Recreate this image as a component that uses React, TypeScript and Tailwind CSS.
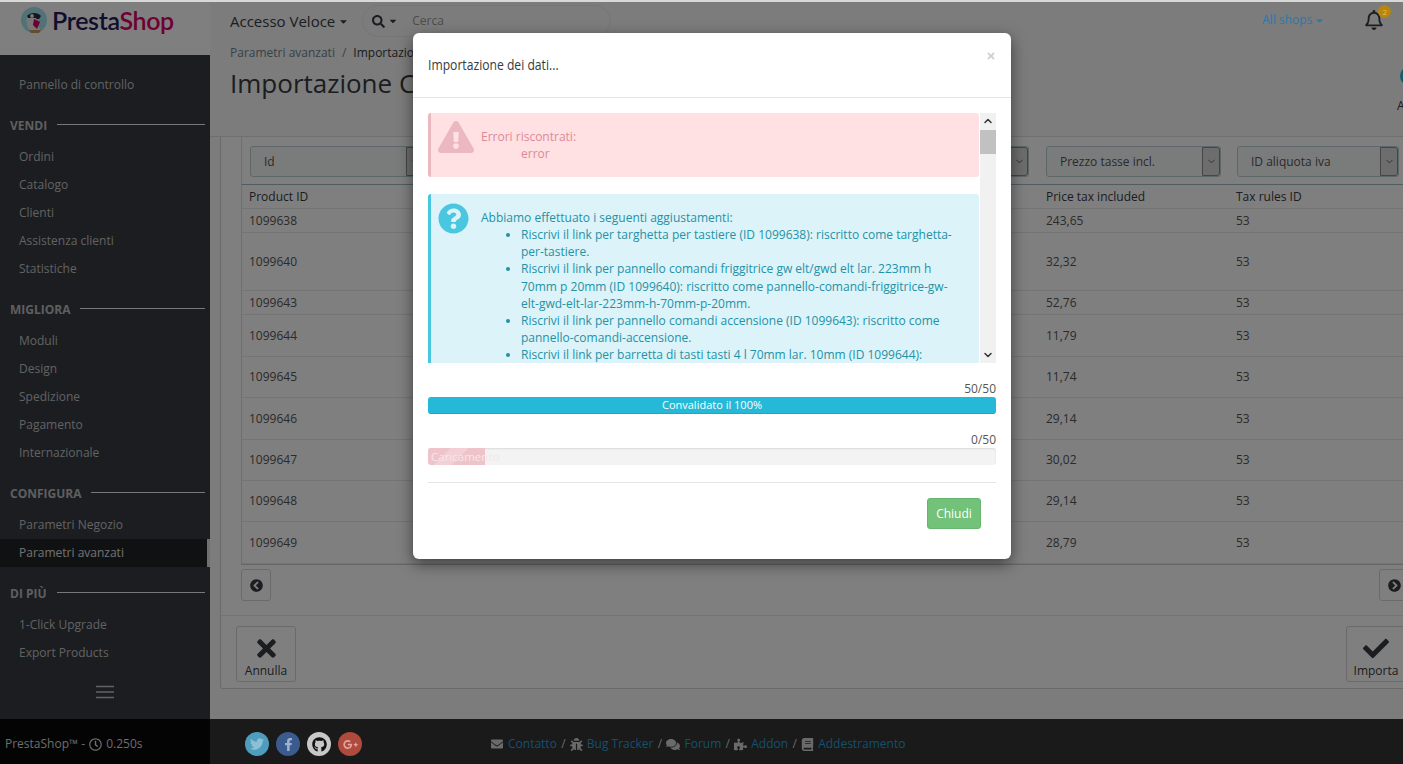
import React from 'react';
import { ChevronDown, ChevronUp } from 'lucide-react';
import {
  FaBook, FaBug, FaCaretDown, FaCheck, FaChevronCircleLeft, FaChevronCircleRight, FaComments,
  FaEnvelope, FaExclamationTriangle, FaFacebookF, FaGithub, FaGooglePlusG, FaPuzzlePiece, FaQuestionCircle,
  FaRegBell, FaRegClock, FaSearch, FaTimes, FaTwitter,
} from 'react-icons/fa';

const navGroups = [
  { title: '', items: ['Pannello di controllo'] },
  { title: 'VENDI', items: ['Ordini', 'Catalogo', 'Clienti', 'Assistenza clienti', 'Statistiche'] },
  { title: 'MIGLIORA', items: ['Moduli', 'Design', 'Spedizione', 'Pagamento', 'Internazionale'] },
  { title: 'CONFIGURA', items: ['Parametri Negozio', 'Parametri avanzati'] },
  { title: 'DI PIÙ', items: ['1-Click Upgrade', 'Export Products'] },
];

const rows = [
  { id: '1099638', price: '243,65', h: 'h-[24px]' },
  { id: '1099640', price: '32,32', h: 'h-[58px]' },
  { id: '1099643', price: '52,76', h: 'h-[24px]' },
  { id: '1099644', price: '11,79', h: 'h-[42px]' },
  { id: '1099645', price: '11,74', h: 'h-[41px]' },
  { id: '1099646', price: '29,14', h: 'h-[42px]' },
  { id: '1099647', price: '30,02', h: 'h-[41px]' },
  { id: '1099648', price: '29,14', h: 'h-[41px]' },
  { id: '1099649', price: '28,79', h: 'h-[42px]' },
];

const fixes = [
  'Riscrivi il link per targhetta per tastiere (ID 1099638): riscritto come targhetta-per-tastiere.',
  'Riscrivi il link per pannello comandi friggitrice gw elt/gwd elt lar. 223mm h 70mm p 20mm (ID 1099640): riscritto come pannello-comandi-friggitrice-gw-elt-gwd-elt-lar-223mm-h-70mm-p-20mm.',
  'Riscrivi il link per pannello comandi accensione (ID 1099643): riscritto come pannello-comandi-accensione.',
  'Riscrivi il link per barretta di tasti tasti 4 l 70mm lar. 10mm (ID 1099644):',
];

const footerLinks = [
  { icon: <FaEnvelope className="w-[14px] h-[12px]" />, label: 'Contatto' },
  { icon: <FaBug className="w-[13px] h-[13px]" />, label: 'Bug Tracker' },
  { icon: <FaComments className="w-[14px] h-[13px]" />, label: 'Forum' },
  { icon: <FaPuzzlePiece className="w-[13px] h-[13px]" />, label: 'Addon' },
  { icon: <FaBook className="w-[13px] h-[13px]" />, label: 'Addestramento' },
];

const Select: React.FC<{ label: string; className: string }> = ({ label, className }) => (
  <div className={`h-[31px] shrink-0 flex items-center justify-between rounded-[3px] border border-[#bbcdd2] bg-[#f5f8f9] ${className}`}>
    <span className="pl-[13px] text-[12px] text-[#555]">{label}</span>
    <span className="w-[18px] h-full flex items-center justify-center bg-[#dadada] border border-[#8a8a8a] rounded-r-[3px] text-[#333]">
      <ChevronDown className="w-[11px] h-[11px]" strokeWidth={1.5} />
    </span>
  </div>
);

const Logo = () => (
  <div className="h-[53px] mt-[2px] flex items-start pl-[21px] pt-[5px]">
    <svg width="26" height="26" viewBox="0 0 26 26" className="shrink-0">
      <circle cx="13" cy="13" r="13" fill="#a3e4ee" />
      <path d="M6 9c3-4 11-4 14 0l-2 3H8z" fill="#2a2a3c" />
      <circle cx="11" cy="9" r="2" fill="#e8e8e8" />
      <path d="M6 11c-1 5 0 9 3 12 3 2 8 2 10 0l-4-12z" fill="#f1f1f1" />
      <path d="M13 12l6 3-3 7-4-4z" fill="#df0067" />
      <path d="M8 23h12l-2 3h-8z" fill="#c89a5a" />
    </svg>
    <span className="ml-[5px] mt-[-3px] text-[25px] leading-[32px] font-semibold tracking-[-0.35px] font-['Lato',sans-serif]">
      <span className="text-[#251b5b]">Presta</span>
      <span className="text-[#df0067]">Shop</span>
    </span>
  </div>
);

const Sidebar = () => (
  <div className="flex-1 flex flex-col pt-[16px] bg-[#363a41] text-[12px] text-[#c4c4c4]">
    {navGroups.map(group => (
      <div key={group.items[0]}>
        {group.title && (
          <div className="h-[44px] pt-[10px] pl-[10px] pr-[5px] flex items-center gap-[10px]">
            <span className="font-bold text-[#bebebe]">{group.title}</span>
            <span className="flex-1 h-px mb-[3px] bg-[#f0f0f0]" />
          </div>
        )}
        {group.items.map(item => (
          <div
            key={item}
            className={`h-[28px] pl-[19px] flex items-center ${item === 'Parametri avanzati' ? 'bg-[#202226] border-r-[3px] border-[#e0e0e0] text-[#e0e0e0]' : ''}`}
          >
            {item}
          </div>
        ))}
      </div>
    ))}
    <div className="flex justify-center mt-[18px]">
      <svg width="20" height="14" viewBox="0 0 20 14" className="text-[#c4c4c4]">
        <path d="M1 1.5h18M1 7h18M1 12.5h18" stroke="currentColor" strokeWidth="1.6" />
      </svg>
    </div>
  </div>
);

const TopBar = () => (
  <div className="h-[40px] mt-[2px] flex items-start pl-[20px]">
    <div className="flex items-center h-[38px] text-[15px] text-[#363a41]">
      Accesso Veloce
      <FaCaretDown className="w-[11px] h-[11px] ml-[3px]" />
    </div>
    <div className="ml-[13px] mt-[3px] w-[249px] h-[32px] rounded-[16px] border border-[#ececec] flex items-center pl-[9px] text-[#363a41]">
      <FaSearch className="w-[13px] h-[13px]" />
      <FaCaretDown className="w-[10px] h-[10px] ml-[3px]" />
      <span className="ml-[14px] text-[12px] text-[#999]">Cerca</span>
    </div>
    <div className="relative z-10 ml-[651px] h-[36px] flex items-center text-[12px] text-[#2a7aa8]">
      All shops
      <FaCaretDown className="w-[11px] h-[11px] ml-[2px]" />
    </div>
    <div className="ml-[40px] mt-[8px] relative">
      <FaRegBell className="w-[18px] h-[20px] text-[#363a41]" />
      <span className="absolute z-10 left-[13px] top-[-5px] w-[13px] h-[13px] rounded-full bg-[#b8860b] text-[#e0c060] text-[8px] leading-[13px] text-center">2</span>
    </div>
  </div>
);

const PageHead = () => (
  <div className="h-[95px] flex border-b border-[#dfdfdf]">
    <div className="w-[1187px] shrink-0 pl-[20px]">
      <div className="mt-[2px] text-[12px] leading-[17px] text-[#6c868e]">
        Parametri avanzati<span className="mx-[7px]">/</span><span className="text-[#363a41]">Importazione CSV</span>
      </div>
      <h1 className="mt-[4px] text-[26px] leading-[36px] text-[#363a41]">Importazione CSV</h1>
    </div>
    <div className="pt-[24px]">
      <div className="ml-[3px] w-[20px] h-[20px] rounded-full bg-[#25b9d7]" />
      <div className="mt-[11px] text-[12px] text-[#363a41]">A</div>
    </div>
  </div>
);

const DataPanel = () => (
  <div className="ml-[10px] w-[1210px] h-[552px] bg-white border border-t-0 border-[#d5d5d5] rounded-b-[3px] text-[12px] text-[#555]">
    <div className="h-[478px] ml-[20px]">
      <div className="flex items-start h-[48px] pt-[9px] pl-[8px] border-b border-[#a0bcc6] border-l border-l-[#dfdfdf]">
        <Select label="Id" className="w-[175px]" />
        <Select label="Prezzo" className="w-[175px] ml-[429px]" />
        <Select label="Prezzo tasse incl." className="w-[175px] ml-[17px]" />
        <Select label="ID aliquota iva" className="w-[162px] ml-[16px]" />
      </div>
      <div className="border-l border-[#dfdfdf]">
        <div className="flex items-center h-[24px] border-b border-[#e8e8e8] text-[#363a41]">
          <span className="w-[796px] pl-[7px]">Product ID</span>
          <span className="w-[190px] pl-[8px]">Price tax included</span>
          <span className="pl-[8px]">Tax rules ID</span>
        </div>
        {rows.map(row => (
          <div key={row.id} className={`flex items-center border-b border-[#e8e8e8] ${row.h}`}>
            <span className="w-[796px] pl-[7px]">{row.id}</span>
            <span className="w-[190px] pl-[8px]">{row.price}</span>
            <span className="pl-[8px]">53</span>
          </div>
        ))}
      </div>
      <div className="border-t border-[#cfcfcf] flex justify-between pt-[4px]">
        <button className="w-[30px] h-[32px] rounded-[3px] border border-[#d5d5d5] flex items-center justify-center text-[#363a41]">
          <FaChevronCircleLeft className="w-[13px] h-[13px]" />
        </button>
        <button className="w-[30px] h-[32px] mr-[20px] ml-auto rounded-[3px] border border-[#d5d5d5] flex items-center justify-center text-[#363a41]">
          <FaChevronCircleRight className="w-[13px] h-[13px]" />
        </button>
      </div>
    </div>
    <div className="border-t border-[#e6e6e6] flex justify-between pt-[10px] pl-[15px]">
      <button className="w-[60px] h-[56px] rounded-[3px] border border-[#d5d5d5] flex flex-col items-center pt-[8px] text-[#363a41]">
        <FaTimes className="w-[27px] h-[27px]" />
        <span className="text-[12px] leading-[17px]">Annulla</span>
      </button>
      <button className="w-[60px] h-[56px] mr-[23px] rounded-[3px] border border-[#d5d5d5] flex flex-col items-center pt-[8px] text-[#363a41]">
        <FaCheck className="w-[26px] h-[27px]" />
        <span className="text-[12px] leading-[17px]">Importa</span>
      </button>
    </div>
  </div>
);

const ImportModal = () => (
  <div className="absolute left-[413px] top-[33px] z-20 w-[598px] h-[526px] bg-white rounded-[6px] shadow-[0_5px_15px_rgba(0,0,0,0.5)] text-[12px]">
    <div className="relative h-[65px] border-b border-[#e5e5e5] flex items-center pl-[15px] pb-[2px]">
      <h4 className="text-[15px] font-medium text-[#363a41] origin-left scale-x-[0.81] whitespace-nowrap">Importazione dei dati...</h4>
      <FaTimes className="absolute right-[15px] top-[18px] w-[10px] h-[10px] text-[#cfcfcf]" />
    </div>
    <div className="px-[15px] pt-[15px]">
      <div className="h-[250px] flex overflow-hidden">
        <div className="w-[551px] shrink-0 overflow-hidden">
          <div className="h-[64px] flex rounded-[3px] bg-[#ffe0e3] border-l-[3px] border-[#ecb8bf] pt-[15px] leading-[17.14px] text-[#dd8a97]">
            <FaExclamationTriangle className="ml-[7px] mt-[-9px] w-[36px] h-[36px] shrink-0 text-[#ecb8bf]" />
            <div className="ml-[7px]">
              <div>Errori riscontrati:</div>
              <div className="pl-[40px]">error</div>
            </div>
          </div>
          <div className="mt-[17px] flex rounded-[3px] bg-[#dcf3f9] border-l-[3px] border-[#4ac7e0] pt-[15px] pb-[15px] pr-[20px] leading-[17.14px] text-[#2392a6]">
            <FaQuestionCircle className="ml-[7px] mt-[-6px] w-[31px] h-[31px] shrink-0 text-[#4ac7e0]" />
            <div className="ml-[12px]">
              <div>Abbiamo effettuato i seguenti aggiustamenti:</div>
              <ul className="pl-[40px] list-disc">
                {fixes.map(fix => <li key={fix}>{fix}</li>)}
              </ul>
            </div>
          </div>
        </div>
        <div className="ml-[1px] w-[16px] bg-[#f1f1f1] flex flex-col items-center text-[#333]">
          <ChevronUp className="w-[12px] h-[12px] mt-[2px]" strokeWidth={3} />
          <div className="w-full h-[24px] mt-[3px] bg-[#c1c1c1]" />
          <ChevronDown className="w-[12px] h-[12px] mt-auto mb-[2px]" strokeWidth={3} />
        </div>
      </div>
      <div className="mt-[18px] text-right leading-[16px] text-[#555]">50/50</div>
      <div className="h-[17px] rounded-[3px] bg-[#25b9d7] text-white text-[11px] leading-[16px] text-center border-b border-[#1fa6c2]">Convalidato il 100%</div>
      <div className="mt-[18px] text-right leading-[16px] text-[#555]">0/50</div>
      <div className="h-[17px] rounded-[3px] bg-[#f3f3f3] shadow-[inset_0_1px_2px_rgba(0,0,0,0.1)] flex">
        <div className="w-[57px] rounded-l-[3px] bg-[linear-gradient(135deg,#eec3c9_0%,#eec3c9_30%,#f2d0d5_30%,#f2d0d5_55%,#eec3c9_55%,#eec3c9_100%)] flex items-center pl-[3px] text-[#f8e6e9] text-[11.5px] whitespace-nowrap">
          Caricamento
        </div>
      </div>
      <div className="mt-[17px] h-px bg-[#e5e5e5]" />
      <div className="flex justify-end pr-[15px] mt-[15px]">
        <button className="w-[54px] h-[31px] rounded-[3px] bg-[#72c279] border border-[#68b56f] text-white text-[12px]">Chiudi</button>
      </div>
    </div>
  </div>
);

const Footer = () => (
  <div className="relative z-10 h-[45px] shrink-0 flex items-center bg-[#1a1a1a] text-[12px]">
    <div className="w-[210px] h-full shrink-0 bg-[#040404] flex items-center pl-[5px] pt-[5px] text-[#6e6e6e] whitespace-nowrap">
      PrestaShop™ -<FaRegClock className="w-[13px] h-[13px] mx-[4px]" />0.250s
    </div>
    <div className="w-[280px] shrink-0 flex items-center gap-[7px] pl-[35px] pt-[5px]">
      <span className="w-[24px] h-[24px] rounded-full bg-[#4f9dbd] flex items-center justify-center text-[#8cc0d6]"><FaTwitter className="w-[14px] h-[14px]" /></span>
      <span className="w-[24px] h-[24px] rounded-full bg-[#3b5a8e] flex items-center justify-center text-[#9fb2cf]"><FaFacebookF className="w-[13px] h-[13px]" /></span>
      <span className="w-[24px] h-[24px] rounded-full bg-[#c8c8c8] flex items-center justify-center text-[#111]"><FaGithub className="w-[15px] h-[15px]" /></span>
      <span className="w-[24px] h-[24px] rounded-full bg-[#b04a3c] flex items-center justify-center text-[#dba79f]"><FaGooglePlusG className="w-[15px] h-[15px]" /></span>
    </div>
    <div className="flex items-center pt-[5px] text-[#6a6a6a]">
      {footerLinks.map((link, i) => (
        <React.Fragment key={link.label}>
          {i > 0 && <span className="mx-[4.3px]">/</span>}
          {link.icon}
          <span className="ml-[4px] text-[#14506f]">{link.label}</span>
        </React.Fragment>
      ))}
    </div>
  </div>
);

export default function App() {
  return (
    <div className="relative w-[1403px] h-[764px] overflow-hidden flex flex-col bg-[#f8f8f8] font-['Open_Sans',sans-serif]">
      <div className="flex-1 flex min-h-0">
        <div className="w-[210px] shrink-0 flex flex-col bg-white">
          <Logo />
          <Sidebar />
        </div>
        <div className="flex-1 min-w-0 overflow-hidden">
          <TopBar />
          <PageHead />
          <DataPanel />
        </div>
      </div>
      <Footer />
      <div className="absolute inset-0 bg-black/50" />
      <div className="absolute inset-x-0 top-0 h-[2px] z-10 bg-[#d8d8d8]" />
      <ImportModal />
    </div>
  );
}
